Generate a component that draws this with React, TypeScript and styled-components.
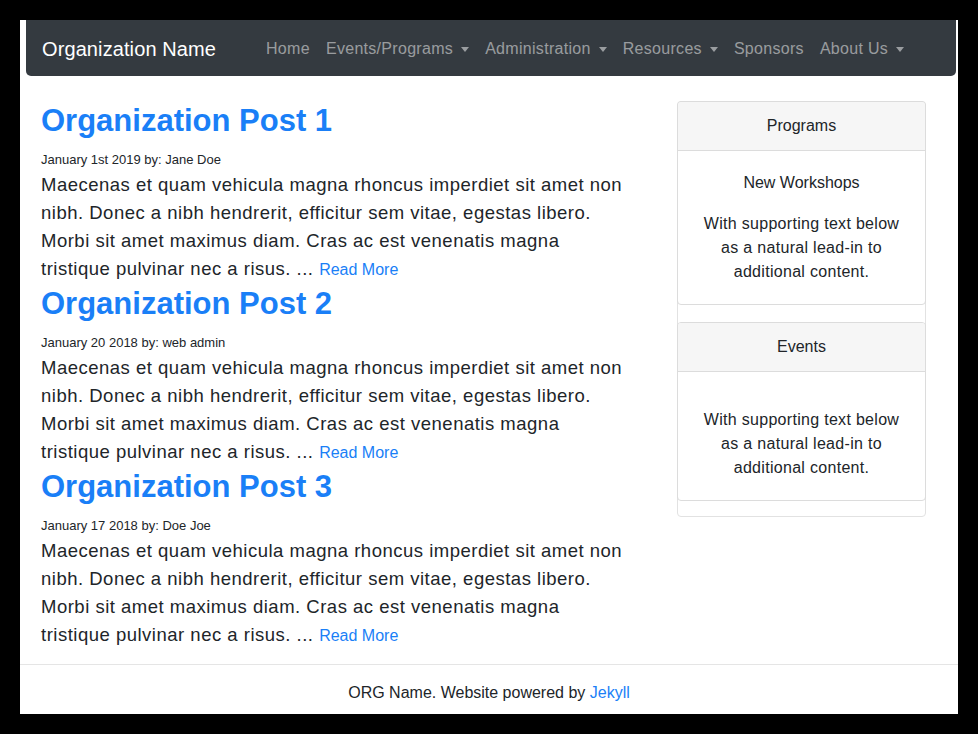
import React from "react";
import styled, {createGlobalStyle} from "styled-components";

const GlobalStyle = createGlobalStyle`
  html, body {
    margin: 0;
    padding: 0;
    background: #000;
  }
  body {
    font-family: "Liberation Sans", Arial, Helvetica, sans-serif;
    color: #212529;
  }
`;

// the white page inside the black window frame
const Page = styled.div`
  width: 938px;
  height: 694px;
  margin: 20px;
  background: #fff;
  display: flex;
  flex-direction: column;
  overflow: hidden;
`;

const Navbar = styled.nav`
  height: 56px;
  margin: 0 2px 0 6px;
  padding: 1px 16px 0;
  box-sizing: border-box;
  background: #343a40;
  border-radius: 0 0 5px 5px;
  display: flex;
  align-items: center;
`;

const Brand = styled.a`
  color: #fff;
  font-size: 20px;
  line-height: 30px;
  letter-spacing: 0.1px;
  margin-right: 42px;
  text-decoration: none;
  white-space: nowrap;
`;

const NavList = styled.ul`
  list-style: none;
  margin: 0;
  padding: 0;
  display: flex;
`;

const NavLink = styled.a<{$dropdown?: boolean}>`
  display: flex;
  align-items: center;
  padding: 8px;
  font-size: 16px;
  line-height: 24px;
  letter-spacing: 0.3px;
  color: rgba(255, 255, 255, 0.5);
  text-decoration: none;
  white-space: nowrap;

  ${p => p.$dropdown && `
    &::after {
      content: "";
      display: inline-block;
      margin-left: 8px;
      border-top: 5px solid;
      border-left: 4.5px solid transparent;
      border-right: 4.5px solid transparent;
      margin-top: 1px;
    }
  `}
`;

const Content = styled.div`
  display: flex;
  align-items: flex-start;
  padding: 25px 0 0 21px;
  gap: 17px;
`;

const Posts = styled.main`
  width: 619px;
`;

const PostTitle = styled.h2`
  margin: 0 0 11px;
  padding-top: 1px;
  font-size: 31px;
  line-height: 37px;
  font-weight: bold;
  color: #1a7ff7;
`;

const PostMeta = styled.div`
  font-size: 13px;
  line-height: 20px;
  margin-bottom: 1px;
`;

const PostBody = styled.p`
  margin: 0;
  font-size: 18.5px;
  line-height: 28px;
  letter-spacing: 0.5px;
  width: 592px;
`;

const ReadMore = styled.a`
  font-size: 16px;
  letter-spacing: normal;
  color: #1a7ff7;
  text-decoration: none;
`;

const Sidebar = styled.aside`
  width: 249px;
  box-sizing: border-box;
  border: 1px solid #e2e2e2;
  border-radius: 4px;
`;

const Card = styled.div`
  border: 1px solid #dcdcdc;
  border-radius: 4px;
  margin: -1px -1px 18px;
  text-align: center;
  overflow: hidden;

  &:last-child {
    margin-bottom: 15px;
  }
`;

const CardHeader = styled.div`
  background: #f6f6f6;
  border-bottom: 1px solid #dcdcdc;
  font-size: 16px;
  line-height: 24px;
  padding: 12px 20px;
`;

const CardBody = styled.div`
  padding: 20px;
  font-size: 16px;
  line-height: 24px;
`;

const CardTitle = styled.div<{$empty?: boolean}>`
  margin-bottom: ${p => (p.$empty ? "16px" : "17px")};
`;

const CardText = styled.p`
  margin: 0;
  letter-spacing: 0.3px;
`;

const Footer = styled.footer`
  margin-top: auto;
  border-top: 1px solid #e5e5e5;
  height: 50px;
  box-sizing: border-box;
  padding-top: 16px;
  text-align: center;
  font-size: 16px;
  line-height: 24px;
`;

const FooterLink = styled.a`
  color: #1a7ff7;
  text-decoration: none;
`;

const navItems = [
    {label: "Home", dropdown: false},
    {label: "Events/Programs", dropdown: true},
    {label: "Administration", dropdown: true},
    {label: "Resources", dropdown: true},
    {label: "Sponsors", dropdown: false},
    {label: "About Us", dropdown: true},
];

const lorem = "Maecenas et quam vehicula magna rhoncus imperdiet sit amet non nibh. Donec a nibh hendrerit, efficitur sem vitae, egestas libero. Morbi sit amet maximus diam. Cras ac est venenatis magna tristique pulvinar nec a risus. ...";

const posts = [
    {title: "Organization Post 1", meta: "January 1st 2019 by: Jane Doe"},
    {title: "Organization Post 2", meta: "January 20 2018 by: web admin"},
    {title: "Organization Post 3", meta: "January 17 2018 by: Doe Joe"},
];

const cards = [
    {header: "Programs", title: "New Workshops"},
    {header: "Events", title: ""},
];

export default function App() {
    return (
        <>
            <GlobalStyle/>
            <Page>
                <Navbar>
                    <Brand href="#">Organization Name</Brand>
                    <NavList>
                        {navItems.map(item => (
                            <li key={item.label}>
                                <NavLink href="#" $dropdown={item.dropdown}>{item.label}</NavLink>
                            </li>
                        ))}
                    </NavList>
                </Navbar>

                <Content>
                    <Posts>
                        {posts.map(post => (
                            <article key={post.title}>
                                <PostTitle>{post.title}</PostTitle>
                                <PostMeta>{post.meta}</PostMeta>
                                <PostBody>
                                    {lorem} <ReadMore href="#">Read More</ReadMore>
                                </PostBody>
                            </article>
                        ))}
                    </Posts>

                    <Sidebar>
                        {cards.map(card => (
                            <Card key={card.header}>
                                <CardHeader>{card.header}</CardHeader>
                                <CardBody>
                                    <CardTitle $empty={!card.title}>{card.title}</CardTitle>
                                    <CardText>With supporting text below as a natural lead-in to additional content.</CardText>
                                </CardBody>
                            </Card>
                        ))}
                    </Sidebar>
                </Content>

                <Footer>
                    ORG Name. Website powered by <FooterLink href="#">Jekyll</FooterLink>
                </Footer>
            </Page>
        </>
    );
}
